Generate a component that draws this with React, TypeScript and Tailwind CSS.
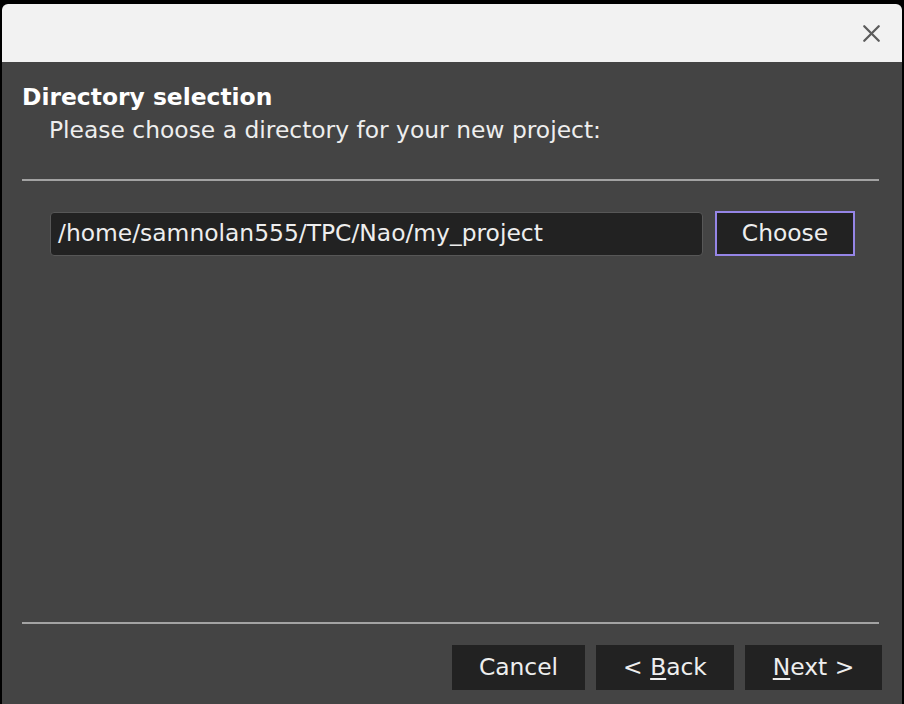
import { X } from 'lucide-react';

const font = { fontFamily: '"DejaVu Sans", Verdana, sans-serif' };

const App = () => {
  return (
    <div className="w-[904px] h-[704px] bg-black overflow-hidden pt-[4px] pl-[2px]" style={font}>
      <div className="w-[900px] h-[700px] flex flex-col rounded-t-[6px] overflow-hidden">
        {/* title bar */}
        <div className="h-[58px] bg-[#f2f2f2] flex items-center justify-end pr-[16px]">
          <X className="w-[29px] h-[29px] text-[#5c5c5c]" strokeWidth={1.9} />
        </div>

        {/* body */}
        <div className="flex-1 bg-[#444444] flex flex-col px-[20px] text-[#eeeeee] text-[23.4px]">
          <p className="mt-[21px] leading-[28px] font-bold text-white">Directory selection</p>
          <p className="pl-[27px] mt-[5px] leading-[28px]">
            Please choose a directory for your new project:
          </p>
          <div className="mt-[35px] h-[2px] bg-[#a3a3a3] mr-[3px]" />

          <div className="flex-1 pt-[30px] pl-[28px] pr-[27px]">
            <div className="flex items-center gap-[12px]">
              <div className="flex-1 h-[44px] bg-[#222222] border border-[#575757] rounded-[4px] flex items-center px-[7px]">
                /home/samnolan555/TPC/Nao/my_project
              </div>
              <button className="w-[140px] h-[45px] bg-[#222222] border-2 border-[#9585e6] text-[#eeeeee]">
                Choose
              </button>
            </div>
          </div>

          <div className="h-[2px] bg-[#a3a3a3] mr-[3px]" />
          <div className="flex justify-end gap-[11px] pt-[21px] pb-[14px]">
            <button className="w-[133px] h-[45px] bg-[#222222] text-[#eeeeee]">Cancel</button>
            <button className="w-[138px] h-[45px] bg-[#222222] text-[#eeeeee]">
              &lt; <span className="underline underline-offset-[3px]">B</span>ack
            </button>
            <button className="w-[137px] h-[45px] bg-[#222222] text-[#eeeeee]">
              <span className="underline underline-offset-[3px]">N</span>ext &gt;
            </button>
          </div>
        </div>
      </div>
    </div>
  );
};

export default App;
